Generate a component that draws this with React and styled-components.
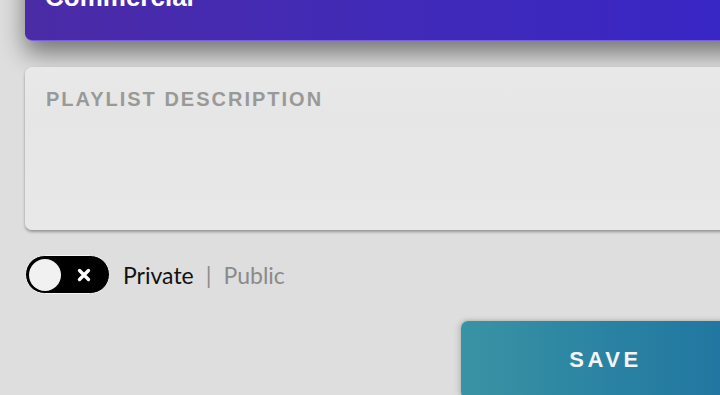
import styled, { createGlobalStyle } from 'styled-components';

const GlobalStyle = createGlobalStyle`
  html, body {
    margin: 0;
    padding: 0;
    height: 100%;
    overflow: hidden;
    background: #dedede;
  }
`;

const Page = styled.main`
  width: 772px;
  padding: 0 25px;
  box-sizing: border-box;
  display: flex;
  flex-direction: column;
  font-family: 'Liberation Sans', Arial, sans-serif;
`;

const NameCard = styled.section`
  margin-top: -40px;
  padding: 24px 20px 30px;
  border-radius: 7px;
  background: linear-gradient(90deg, #4b2ba6 0%, #412ab8 50%, #3826c6 100%);
  border-bottom: 1px solid #7a5ee2;
  box-shadow: 0 12px 24px rgba(0, 0, 0, 0.48);
`;

const NameText = styled.h1`
  margin: 0;
  font-size: 26px;
  line-height: 26px;
  font-weight: 700;
  color: #ffffff;
`;

const DescriptionBox = styled.section`
  margin-top: 26px;
  height: 163px;
  box-sizing: border-box;
  padding: 22px 21px;
  border-radius: 7px;
  background: linear-gradient(180deg, #e9e9e9 0%, #e6e6e6 30%, #e8e8e8 100%);
  box-shadow: 0 2px 3px rgba(0, 0, 0, 0.32), 0 0 1px rgba(0, 0, 0, 0.12);
`;

const DescriptionLabel = styled.div`
  font-size: 20px;
  line-height: 20px;
  font-weight: 700;
  letter-spacing: 2px;
  color: #999999;
`;

const PrivacyRow = styled.div`
  margin-top: 25px;
  display: flex;
  align-items: center;
  gap: 13px;
  font-family: Lato, 'Open Sans', sans-serif;
  font-size: 23px;
`;

const Toggle = styled.div`
  width: 85px;
  height: 39px;
  box-sizing: border-box;
  border-radius: 20px;
  background: #000;
  border: 1.5px solid #f4f4f4;
  display: flex;
  align-items: center;
  padding: 0 3px;
  gap: 16px;
`;

const Knob = styled.span`
  width: 32px;
  height: 32px;
  border-radius: 50%;
  background: #f1f1f1;
`;

const Options = styled.div`
  display: flex;
  align-items: center;
`;

const Option = styled.span`
  color: ${(p) => (p.$active ? '#111111' : '#8a8a8a')};
`;

const Divider = styled.span`
  color: #8c8c8c;
  margin: 0 12px;
`;

const Actions = styled.div`
  margin-top: 27px;
  display: flex;
  justify-content: flex-end;
`;

const SaveButton = styled.button`
  width: 286px;
  height: 78px;
  border: none;
  border-radius: 7px;
  background: linear-gradient(90deg, #3a93a3 0%, #2a83a2 50%, #1f74a1 100%);
  box-shadow: -2px 0 6px rgba(0, 0, 0, 0.15), 0 -1px 3px rgba(0, 0, 0, 0.1);
  color: #f4f4f4;
  font-family: 'Liberation Sans', Arial, sans-serif;
  font-size: 22px;
  font-weight: 700;
  letter-spacing: 3.5px;
  padding: 0 0 0 3px;
`;

const App = () => {
  return (
    <>
      <GlobalStyle />
      <Page>
        <NameCard>
          <NameText>Commercial</NameText>
        </NameCard>
        <DescriptionBox>
          <DescriptionLabel>PLAYLIST DESCRIPTION</DescriptionLabel>
        </DescriptionBox>
        <PrivacyRow>
          <Toggle>
            <Knob />
            <svg width="14" height="14" viewBox="0 0 14 14">
              <path
                d="M2.5 2.5 L11.5 11.5 M11.5 2.5 L2.5 11.5"
                stroke="#fff"
                strokeWidth="3.4"
                strokeLinecap="round"
              />
            </svg>
          </Toggle>
          <Options>
            <Option $active>Private</Option>
            <Divider>|</Divider>
            <Option>Public</Option>
          </Options>
        </PrivacyRow>
        <Actions>
          <SaveButton>SAVE</SaveButton>
        </Actions>
      </Page>
    </>
  );
};

export default App;
